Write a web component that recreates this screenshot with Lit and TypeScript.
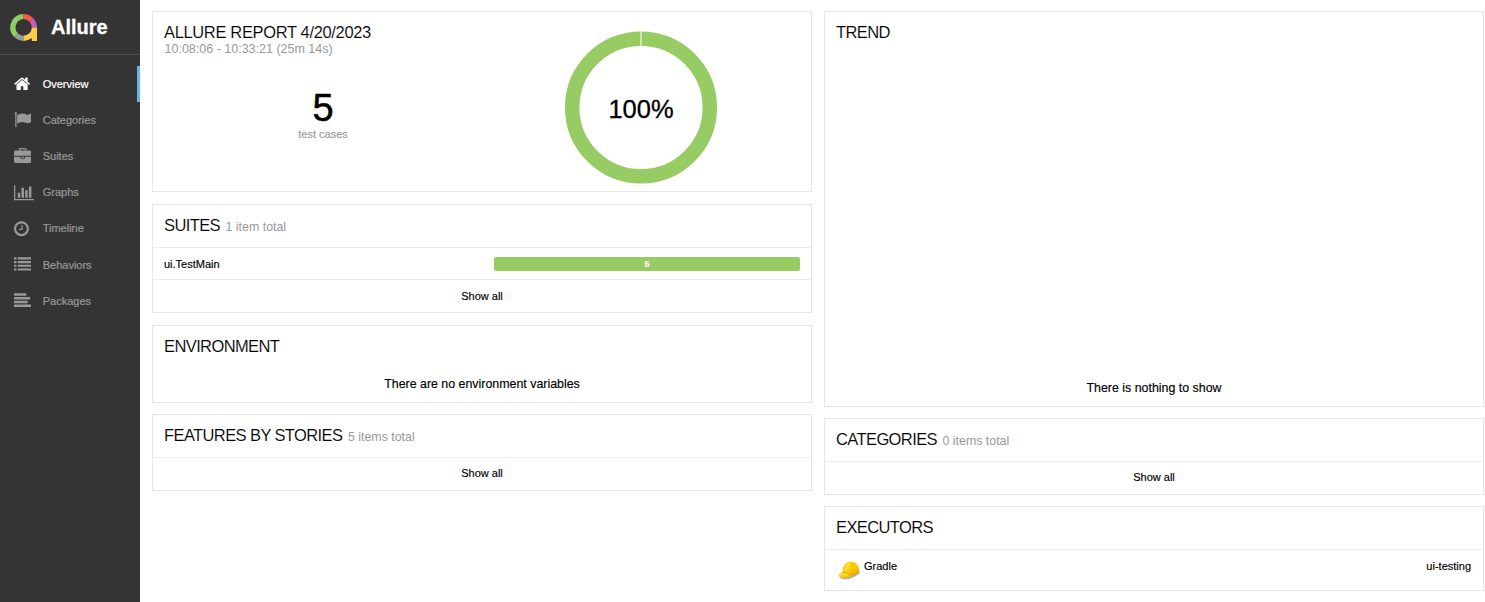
import { LitElement, html, css, svg } from "lit";
import { customElement, property } from "lit/decorators.js";

const icons: Record<string, { w: number; d: string }> = {
  home: { w: 1664, d: "M1408 992v480q0 26-19 45t-45 19h-384v-384h-256v384h-384q-26 0-45-19t-19-45v-480q0-1 .5-3t.5-3l575-474 575 474q1 2 1 6zm223-69l-62 74q-8 9-21 11h-3q-13 0-21-7l-692-577-692 577q-12 8-24 7-13-2-21-11l-62-74q-8-10-7-23.5t11-21.5l719-599q32-26 76-26t76 26l244 204v-195q0-14 9-23t23-9h192q14 0 23 9t9 23v408l219 182q10 8 11 21.5t-7 23.5z" },
  flag: { w: 1792, d: "M320 256q0 72-64 110v1266q0 13-9.500 22.500t-22.500 9.500h-64q-13 0-22.500-9.500t-9.500-22.500v-1266q-64-38-64-110 0-53 37.500-90.500t90.500-37.500 90.500 37.500 37.500 90.500zm1472 64v763q0 25-12.500 38.500t-39.500 27.500q-215 116-369 116-61 0-123.500-22t-108.500-48-115.500-48-142.500-22q-192 0-464 146-17 9-33 9-26 0-45-19t-19-45v-742q0-32 31-55 21-14 79-43 236-120 421-120 107 0 200 29t219 88q38 19 88 19 54 0 117.500-21t110-47 88-47 54.500-21q26 0 45 19t19 45z" },
  briefcase: { w: 1792, d: "M640 256h512v-128h-512v128zm1152 640v480q0 66-47 113t-113 47h-1472q-66 0-113-47t-47-113v-480h672v160q0 26 19 45t45 19h320q26 0 45-19t19-45v-160h672zm-768 0v128h-256v-128h256zm768-480v384h-1792v-384q0-66 47-113t113-47h352v-160q0-40 28-68t68-28h576q40 0 68 28t28 68v160h352q66 0 113 47t47 113z" },
  chart: { w: 2048, d: "M640 896v512h-256v-512h256zm384-512v1024h-256v-1024h256zm1024 1152v128h-2048v-1536h128v1408h1920zm-640-896v768h-256v-768h256zm384-384v1152h-256v-1152h256z" },
  clock: { w: 1536, d: "M896 544v448q0 14-9 23t-23 9h-320q-14 0-23-9t-9-23v-64q0-14 9-23t23-9h224v-352q0-14 9-23t23-9h64q14 0 23 9t9 23zm416 352q0-148-73-273t-198-198-273-73-273 73-198 198-73 273 73 273 198 198 273 73 273-73 198-198 73-273zm224 0q0 209-103 385.500t-279.500 279.500-385.500 103-385.500-103-279.500-279.500-103-385.500 103-385.500 279.500-279.500 385.500-103 385.500 103 279.500 279.500 103 385.500z" },
  list: { w: 1792, d: "M0 128h256v224h-256zM384 128h1408v224h-1408zM0 512h256v224h-256zM384 512h1408v224h-1408zM0 896h256v224h-256zM384 896h1408v224h-1408zM0 1280h256v224h-256zM384 1280h1408v224h-1408z" },
  align: { w: 1792, d: "M0 180q0-52 52-52h1176q52 0 52 52v152q0 52-52 52h-1176q-52 0-52-52zM0 564q0-52 52-52h1560q52 0 52 52v152q0 52-52 52h-1560q-52 0-52-52zM0 948q0-52 52-52h1304q52 0 52 52v152q0 52-52 52h-1304q-52 0-52-52zM0 1332q0-52 52-52h1688q52 0 52 52v152q0 52-52 52h-1688q-52 0-52-52z" },
};

const SIZE = 17.4;

@customElement("nav-item")
class NavItem extends LitElement {
  @property() icon = "home";
  @property() label = "";
  static styles = css`
    :host { display: flex; align-items: center; height: 36.1px; padding-left: 14px; color: #999; font-size: 11px; }
    :host([active]) { color: #fff; box-shadow: inset -3px 0 0 #64b5f6; }
    .icon { width: 28.7px; display: flex; }
    svg { fill: currentColor; display: block; }
    .label { -webkit-text-stroke: 0.2px currentColor; }
  `;
  render() {
    const i = icons[this.icon];
    return html`<span class="icon"><svg width=${(i.w / 1792) * SIZE} height=${SIZE} viewBox="0 0 ${i.w} 1792"><path d=${i.d}></path></svg></span><span class="label">${this.label}</span>`;
  }
}

@customElement("report-widget")
class ReportWidget extends LitElement {
  @property() heading = "";
  @property() note = "";
  static styles = css`
    :host { display: block; box-sizing: border-box; border: 1px solid #e6e6e6; background: #fff; }
    .head { box-sizing: border-box; padding: 11px 11px 0; height: 30px; line-height: 18px; white-space: nowrap; }
    .title { font-size: 16.5px; letter-spacing: var(--title-spacing, -0.6px); color: #000; -webkit-text-stroke: 0.12px #fff; }
    .note { font-size: 12.4px; color: #999; margin-left: 5.5px; }
  `;
  render() {
    return html`<div class="head"><span class="title">${this.heading}</span>${this.note ? html`<span class="note">${this.note}</span>` : ""}</div><slot></slot>`;
  }
}

const logo = svg`
  <path d="M4.300 23L7.900 19.200A8.300 8.300 0 0 0 13.500 21.700V26.900A13.400 13.400 0 0 1 4.300 23Z" fill="#999"/>
  <path d="M4.300 23A13.400 13.400 0 0 1 13.500 0V5.100A8.400 8.400 0 0 0 7.900 19.300Z" fill="#8fcc62"/>
  <path d="M13.500 0A13.400 13.400 0 0 1 23 4.100L19.400 7.700A8.300 8.300 0 0 0 13.500 5.100Z" fill="#f95b42"/>
  <path d="M23 4.100A13.400 13.400 0 0 1 27 13.400H21.800A8.300 8.300 0 0 0 19.400 7.700Z" fill="#c957b8"/>
  <path d="M27 13.400V26.900H21.800V24Q18 26.900 13.500 26.900V21.700A8.300 8.300 0 0 0 21.800 13.400Z" fill="#ffcd4a"/>`;

@customElement("app-root")
class AppRoot extends LitElement {
  static styles = css`
    :host { display: flex; width: 100%; height: 602px; overflow: hidden; background: #fff; color: #000; font-family: "Liberation Sans", Arial, sans-serif; }
    .side { width: 140px; flex: none; background: #343434; box-sizing: border-box; }
    .brand { height: 55px; box-sizing: border-box; border-bottom: 1px solid #505050; display: flex; align-items: center; padding-left: 10px; gap: 14px; color: #fff; font-weight: 700; font-size: 20px; -webkit-text-stroke: 0.3px #fff; }
    .brand svg { display: block; }
    .nav { padding-top: 11px; }
    .cols { flex: 1; display: grid; grid-template-columns: 660px 660px; gap: 12px; padding: 11px 0 0 12px; align-items: start; }
    .col { display: flex; flex-direction: column; gap: 12px; }
    .summary { height: 181px; --title-spacing: -0.35px; }
    .time { font-size: 12.5px; line-height: 14px; color: #999; padding-left: 11.5px; }
    .stats { display: flex; height: 130px; }
    .count { width: 340px; text-align: center; padding-top: 31px; }
    .num { font-size: 38px; line-height: 42px; -webkit-text-stroke: 0.5px #000; }
    .cases { font-size: 11px; line-height: 12px; color: #999; margin-top: -1px; -webkit-text-stroke: 0.15px #999; }
    .ring { display: block; margin: -25px 0 0 71px; }
    .suites { height: 109px; }
    .row { margin-top: 12px; border-top: 1px solid #ececec; height: 32px; display: flex; align-items: center; justify-content: space-between; padding: 0 11px; font-size: 11px; box-sizing: border-box; -webkit-text-stroke: 0.15px currentColor; }
    .bar { width: 306px; height: 14px; border-radius: 2px; background: #97cc64; color: #fff; font-size: 9px; font-weight: 700; line-height: 14px; text-align: center; margin-top: 1px; }
    .all { border-top: 1px solid #ececec; height: 33px; line-height: 32px; box-sizing: border-box; font-size: 11px; text-align: center; -webkit-text-stroke: 0.15px #000; }
    .all.first { margin-top: 12px; line-height: 31px; }
    .env { height: 78px; }
    .empty { font-size: 12.4px; line-height: 14px; text-align: center; -webkit-text-stroke: 0.15px #000; }
    .env .empty { margin-top: 21px; }
    .feat, .cats { height: 77px; margin-top: -1px; }
    .trend { height: 396px; }
    .trend .empty { margin-top: 339px; }
    .exec { height: 85px; margin-top: -1px; }
    .runner { margin-top: 12px; border-top: 1px solid #ececec; display: flex; padding: 10px 12px 0 13px; font-size: 11px; line-height: 13px; -webkit-text-stroke: 0.15px #000; }
    .runner svg { margin-top: 1px; display: block; }
    .tool { flex: 1; padding-left: 3px; }
  `;
  render() {
    const nav = [["home", "Overview"], ["flag", "Categories"], ["briefcase", "Suites"], ["chart", "Graphs"], ["clock", "Timeline"], ["list", "Behaviors"], ["align", "Packages"]];
    return html`
      <aside class="side">
        <div class="brand"><svg width="27" height="27" viewBox="0 0 27 27">${logo}</svg><span>Allure</span></div>
        <nav class="nav">${nav.map(([i, l], n) => html`<nav-item .icon=${i} .label=${l} ?active=${n === 0}></nav-item>`)}</nav>
      </aside>
      <main class="cols">
        <div class="col">
          <report-widget class="summary" heading="ALLURE REPORT 4/20/2023">
            <div class="time">10:08:06 - 10:33:21 (25m 14s)</div>
            <div class="stats">
              <div class="count"><div class="num">5</div><div class="cases">test cases</div></div>
              <svg class="ring" width="154" height="154" viewBox="0 0 154 154">
                <circle cx="77" cy="76.500" r="68.800" fill="none" stroke="#97cc64" stroke-width="14.500"></circle>
                <path d="M77 0V16" stroke="#fff" stroke-width="1"></path>
                <text x="77" y="87" text-anchor="middle" font-size="25.500" stroke="#000" stroke-width=".3">100%</text>
              </svg>
            </div>
          </report-widget>
          <report-widget class="suites" heading="SUITES" note="1 item total">
            <div class="row"><span>ui.TestMain</span><div class="bar">5</div></div>
            <div class="all">Show all</div>
          </report-widget>
          <report-widget class="env" heading="ENVIRONMENT"><div class="empty">There are no environment variables</div></report-widget>
          <report-widget class="feat" heading="FEATURES BY STORIES" note="5 items total"><div class="all first">Show all</div></report-widget>
        </div>
        <div class="col">
          <report-widget class="trend" heading="TREND"><div class="empty">There is nothing to show</div></report-widget>
          <report-widget class="cats" heading="CATEGORIES" note="0 items total"><div class="all first">Show all</div></report-widget>
          <report-widget class="exec" heading="EXECUTORS">
            <div class="runner">
              <svg width="23" height="20" viewBox="0 0 23 20">
                <defs><linearGradient id="hat" x1="0" y1="0" x2="1" y2="1"><stop offset="0" stop-color="#ffe020"></stop><stop offset=".55" stop-color="#fccb0b"></stop><stop offset="1" stop-color="#e0a000"></stop></linearGradient></defs>
                <path d="M1 15.500Q4 19 10 18.200Q16 17 22 12L20 11L3 14Z" fill="#777" opacity=".6"></path>
                <path d="M0.500 14Q1 12 4.300 11C4.500 5 7.500 .8 13 .5C18 .5 21 4.500 21.500 10.300Q21.800 11.800 19.500 12.800C16 14 13 17 7.500 17Q2 17 .5 14Z" fill="url(#hat)"></path>
                <path d="M4.300 11.200Q10.500 11 13.500 14Q17 13 20.500 10.500" fill="none" stroke="#d69a00" stroke-width=".6"></path>
                <path d="M8 9.500Q8 5 11.500 2.300" fill="none" stroke="#fff58c" stroke-width=".9"></path>
                <path d="M14 12Q16.500 6 14 1.800" fill="none" stroke="#e8b000" stroke-width=".7"></path>
                <path d="M1.500 13.700Q5 11.800 10 14.300" fill="none" stroke="#fff06a" stroke-width=".8"></path>
              </svg>
              <span class="tool">Gradle</span><span>ui-testing</span>
            </div>
          </report-widget>
        </div>
      </main>`;
  }
}
